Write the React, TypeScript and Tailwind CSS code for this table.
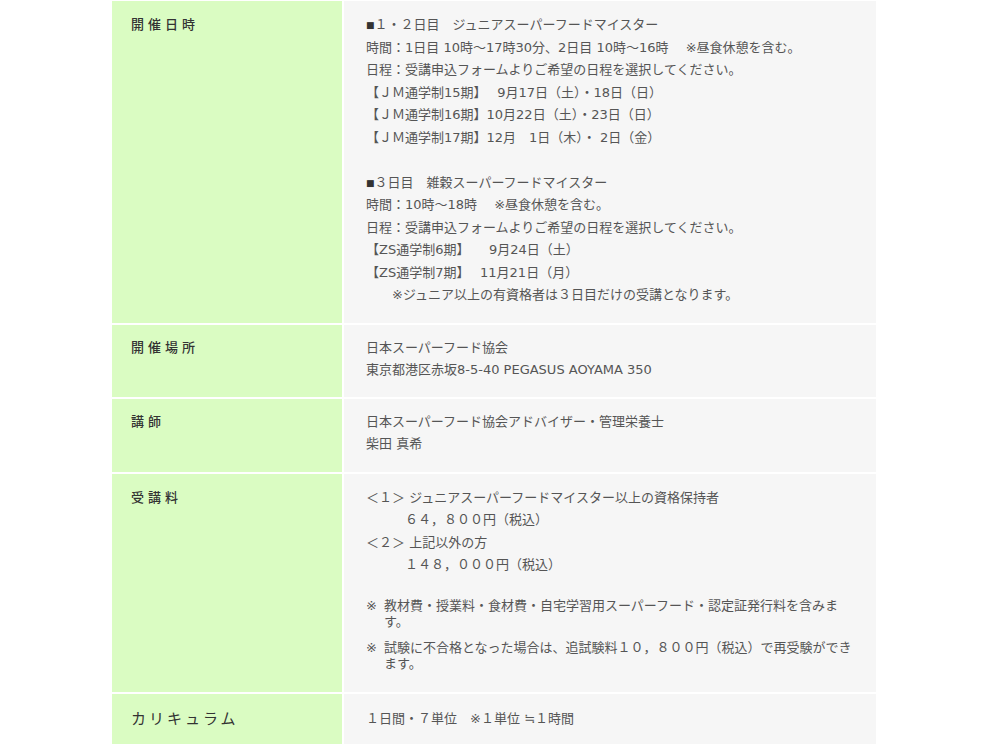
import React from "react";

const font = "font-['DejaVu_Sans','Noto_Sans_CJK_JP',sans-serif]";

function Label({ children, className = "" }: { children: React.ReactNode; className?: string }) {
  return (
    <div className={`bg-[#dafcc2] pl-[19px] text-[#333] ${className}`}>
      {children}
    </div>
  );
}

function Cell({ children, className = "" }: { children: React.ReactNode; className?: string }) {
  return (
    <div className={`bg-[#f6f6f6] pl-[22px] pr-[20px] text-[13px] leading-[22.5px] text-[#555] ${className}`}>
      {children}
    </div>
  );
}

function Heading({ children }: { children: React.ReactNode }) {
  return (
    <p>
      <span className="text-[9px] align-[1px] text-[#333]">■</span>
      {children}
    </p>
  );
}

function Note({ children }: { children: React.ReactNode }) {
  return (
    <div className="flex leading-4">
      <span className="w-[18px] shrink-0">※</span>
      <span>{children}</span>
    </div>
  );
}

export default function App() {
  return (
    <div className={`min-h-[750px] bg-white pt-px ${font}`}>
      <div className="ml-[112px] grid w-[764px] grid-cols-[230px_532px] gap-x-[2px] gap-y-[2px]">
        <Label className="pt-[13px] text-[13px] leading-[22.5px] tracking-[4px] font-medium">開催日時</Label>
        <Cell className="pt-[13px] pb-[16px]">
          <Heading>１・２日目　ジュニアスーパーフードマイスター</Heading>
          <p>時間：1日目 10時～17時30分、2日目 10時～16時　 ※昼食休憩を含む。</p>
          <p>日程：受講申込フォームよりご希望の日程を選択してください。</p>
          <p>【ＪＭ通学制15期】　 9月17日（土）・18日（日）</p>
          <p>【ＪＭ通学制16期】10月22日（土）・23日（日）</p>
          <p>【ＪＭ通学制17期】12月　1日（木）・ 2日（金）</p>
          <p>&nbsp;</p>
          <Heading>３日目　雑穀スーパーフードマイスター</Heading>
          <p>時間：10時～18時　 ※昼食休憩を含む。</p>
          <p>日程：受講申込フォームよりご希望の日程を選択してください。</p>
          <p>【ZS通学制6期】　　9月24日（土）</p>
          <p>【ZS通学制7期】　 11月21日（月）</p>
          <p>　　※ジュニア以上の有資格者は３日目だけの受講となります。</p>
        </Cell>

        <Label className="pt-[12px] text-[13px] leading-[22.5px] tracking-[4px] font-medium">開催場所</Label>
        <Cell className="pt-[12px] pb-[15px]">
          <p>日本スーパーフード協会</p>
          <p>東京都港区赤坂8-5-40 PEGASUS AOYAMA 350</p>
        </Cell>

        <Label className="pt-[12px] text-[13px] leading-[22.5px] tracking-[4px] font-medium">講師</Label>
        <Cell className="pt-[12px] pb-[16px]">
          <p>日本スーパーフード協会アドバイザー・管理栄養士</p>
          <p>柴田 真希</p>
        </Cell>

        <Label className="pt-[13px] text-[13px] leading-[22.5px] tracking-[4px] font-medium">受講料</Label>
        <Cell className="pt-[13px] pb-[20px]">
          <p>＜１＞ ジュニアスーパーフードマイスター以上の資格保持者</p>
          <p>　　　６４，８００円（税込）</p>
          <p>＜２＞ 上記以外の方</p>
          <p>　　　１４８，０００円（税込）</p>
          <div className="mt-[21px] flex flex-col gap-[10px]">
            <Note>
              教材費・授業料・食材費・自宅学習用スーパーフード・認定証発行料を含みま
              <br />
              す。
            </Note>
            <Note>
              試験に不合格となった場合は、追試験料１０，８００円（税込）で再受験ができ
              <br />
              ます。
            </Note>
          </div>
        </Cell>

        <Label className="pt-[14px] text-[15px] leading-[22.5px] tracking-[3px]">カリキュラム</Label>
        <Cell className="pt-[14px] pb-[14px]">
          <p>１日間・７単位　※１単位 ≒１時間</p>
        </Cell>
      </div>
    </div>
  );
}
